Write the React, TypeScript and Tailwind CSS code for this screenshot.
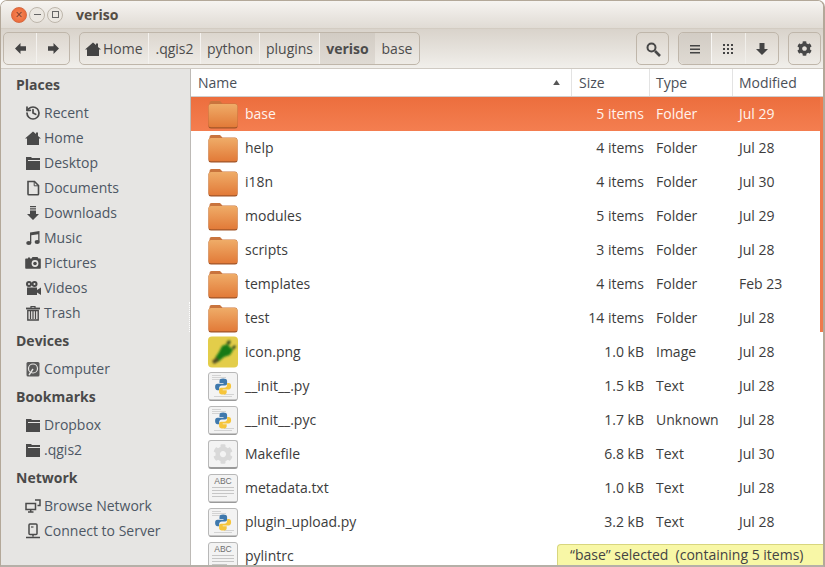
import { History } from 'lucide-react';
import { FaCog } from 'react-icons/fa';

const font = { fontFamily: '"Open Sans", "Noto Sans", sans-serif' };

const HomeIcon = ({ className = 'w-4 h-4' }: { className?: string }) => (
  <svg viewBox="0 0 16 16" className={className} fill="currentColor">
    <path d="M8 1.5 11 4V2.5h2v3.4L16 8.6h-2V15H2V8.6H0z" />
  </svg>
);

const FolderGlyph = () => (
  <svg viewBox="0 0 16 16" className="w-4 h-4" fill="currentColor">
    <path d="M1 2h5l1 1h8v12H1z" />
    <path d="M3 5h12v1H3z" fill="#e6e5e3" />
  </svg>
);

const DocIcon = () => (
  <svg viewBox="0 0 16 16" className="w-4 h-4" fill="none" stroke="currentColor" strokeWidth="1.6">
    <path d="M3 1.5h6.5L13.5 5.5V14a.8.8 0 0 1-.8.8H3.8A.8.8 0 0 1 3 14z" />
    <path d="M9.2 1.5v4.3h4.3" strokeWidth="1" />
  </svg>
);

const DownloadIcon = () => (
  <svg viewBox="0 0 16 16" className="w-4 h-4" fill="currentColor">
    <path d="M5 1h6v1.3H5zM5 3.3h6v1.3H5zM5 5.6h6V9h3l-6 6-6-6h3z" />
  </svg>
);

const MusicIcon = () => (
  <svg viewBox="0 0 16 16" className="w-4 h-4" fill="currentColor">
    <path d="M5 2.5 14.5 1v10.5h-1.3V4.2L6.3 5.3V13H5z" />
    <ellipse cx="3.8" cy="13" rx="2.6" ry="2" />
    <ellipse cx="12.2" cy="12" rx="2.6" ry="2" />
  </svg>
);

const CameraIcon = () => (
  <svg viewBox="0 0 16 16" className="w-4 h-4" fill="currentColor">
    <path d="M1 3.5h2V2.5h2v1h1.5L7.5 2h5l1 1.5H15a.8.8 0 0 1 .8.8V13a.8.8 0 0 1-.8.8H1a.8.8 0 0 1-.8-.8V4.300a.8.8 0 0 1 .8-.8z" />
    <circle cx="10" cy="8.500" r="3.400" fill="#e6e5e3" />
    <circle cx="10" cy="8.500" r="1.800" />
  </svg>
);

const VideoIcon = () => (
  <svg viewBox="0 0 16 16" className="w-4 h-4" fill="currentColor">
    <circle cx="4" cy="4" r="3" />
    <circle cx="9.500" cy="4" r="3" />
    <circle cx="4" cy="4" r="1" fill="#e6e5e3" />
    <circle cx="9.500" cy="4" r="1" fill="#e6e5e3" />
    <path d="M2 7.500h10V10l4-2.500V15l-4-2.500V15H2z" />
  </svg>
);

const TrashIcon = () => (
  <svg viewBox="0 0 16 16" className="w-4 h-4" fill="none" stroke="currentColor">
    <path d="M1 3.500h14" strokeWidth="1.800" />
    <path d="M6 3V1.500h4V3" strokeWidth="1.200" />
    <path d="M2.800 5.500h10.400V15H2.800z" strokeWidth="1.400" />
    <path d="M5.500 6v8M8 6v8M10.500 6v8" strokeWidth="1.200" />
  </svg>
);

const DriveIcon = () => (
  <svg viewBox="0 0 16 16" className="w-4 h-4">
    <rect x="1.500" y="1" width="13" height="14.500" rx="1.500" fill="#5a5a5a" />
    <circle cx="8" cy="7.500" r="4.500" fill="none" stroke="#e6e5e3" strokeWidth="1.200" />
    <path d="M8 8 4 14" stroke="#e6e5e3" strokeWidth="1.400" />
  </svg>
);

const NetworkIcon = () => (
  <svg viewBox="0 0 16 16" className="w-4 h-4" fill="none" stroke="currentColor" strokeWidth="1.500">
    <path d="M1 5.500h9.500v6H1z" />
    <path d="M3 14h5.500M5.700 11.500V14" />
    <path d="M10 2h5v5.500h-2.500" />
  </svg>
);

const ServerIcon = () => (
  <svg viewBox="0 0 16 16" className="w-4 h-4" fill="none" stroke="currentColor" strokeWidth="1.500">
    <rect x="4" y="1" width="8" height="10.500" rx="1" />
    <path d="M8 11.500v2M1 14.500h14" />
    <path d="M6 4h2.500" strokeWidth="1.200" />
  </svg>
);

const Folder = () => (
  <svg viewBox="0 0 30 30" className="w-[30px] h-[30px] shrink-0">
    <defs>
      <linearGradient id="fold" x1="0" y1="0" x2="0" y2="1">
        <stop offset="0" stopColor="#efac68" />
        <stop offset="1" stopColor="#e27a38" />
      </linearGradient>
    </defs>
    <path d="M1.500 4a2 2 0 0 1 2-2h8.500l2.500 2.500H27a2 2 0 0 1 2 2V10H1.500z" fill="#c9743d" />
    <rect x="0.500" y="5" width="29" height="24.500" rx="2.500" fill="#a05528" />
    <rect x="0.500" y="5" width="29" height="23.300" rx="2.500" fill="url(#fold)" />
  </svg>
);

const TextLines = () => (
  <g fill="#cbcbcb">
    <rect x="4" y="3" width="9" height=".8" />
    <rect x="4" y="5" width="14" height=".8" />
    <rect x="4" y="7" width="8" height=".8" />
    <rect x="16" y="22" width="10" height=".8" />
    <rect x="6" y="24" width="18" height=".8" />
  </g>
);

const PythonFile = () => (
  <svg viewBox="0 0 30 29" className="w-[30px] h-[29px] shrink-0">
    <rect x="0.500" y="0.500" width="29" height="28" rx="2.500" fill="#f3f3f3" stroke="#b8b8b8" />
    <path d="M1 27.500h28a2 2 0 0 1-2 1.500H3a2 2 0 0 1-2-1.500z" fill="#9a9a9a" />
    <TextLines />
    <g transform="translate(5.500 5) scale(.8)">
      <path d="M12 2C9 2 7.500 3 7.500 5v2.500h5v1H5C3 8.500 2 10 2 12.500s1 4 3 4h2V14c0-2 1.500-3.500 3.500-3.500h4c1.500 0 2.500-1 2.500-2.500V5c0-2-2-3-5-3z" fill="#3f79ad" />
      <path d="M12 2C9 2 7.500 3 7.500 5v2.500h5v1H5C3 8.500 2 10 2 12.500s1 4 3 4h2V14c0-2 1.500-3.500 3.500-3.500h4c1.500 0 2.500-1 2.500-2.500V5c0-2-2-3-5-3z" fill="#f6c53b" transform="rotate(180 12 12)" />
    </g>
  </svg>
);

const AbcFile = () => (
  <svg viewBox="0 0 30 29" className="w-[30px] h-[29px] shrink-0">
    <rect x="0.500" y="0.500" width="29" height="28" rx="2.500" fill="#f3f3f3" stroke="#b8b8b8" />
    <path d="M1 27.500h28a2 2 0 0 1-2 1.500H3a2 2 0 0 1-2-1.500z" fill="#9a9a9a" />
    <text x="15" y="10" textAnchor="middle" fontSize="8.500" fill="#707070" style={{ fontFamily: '"Liberation Sans", sans-serif' }}>ABC</text>
    <g fill="#c6c6c6">
      <rect x="4" y="13" width="22" height="1" />
      <rect x="4" y="16" width="22" height="1" />
      <rect x="4" y="19" width="22" height="1" />
      <rect x="4" y="22" width="15" height="1" />
    </g>
  </svg>
);

const GearFile = () => (
  <div className="w-[30px] h-[29px] shrink-0 rounded-[3px] border border-[#b8b8b8] border-b-2 border-b-[#9a9a9a] bg-[#f3f3f3] flex items-center justify-center">
    <FaCog className="w-[20px] h-[20px] text-[#d9d9d9]" />
  </div>
);

const ImageFile = () => (
  <svg viewBox="0 0 30 32" className="w-[30px] h-[32px] shrink-0">
    <defs>
      <filter id="soft"><feGaussianBlur stdDeviation="1.200" /></filter>
    </defs>
    <rect x="0" y="0.500" width="30" height="31" rx="4" fill="#e3cd4a" />
    <g filter="url(#soft)">
      <path d="M7 22 11 16 14 10 19 8 25 14 22 19 16 21 10 26z" fill="#157a18" />
      <path d="M4 25 9 21 11 25 6 28z" fill="#4e4c20" />
      <path d="M18 7l3-3 2 2-2 3zM24 11l3-2 1 2-3 3z" fill="#2d4a1b" />
    </g>
  </svg>
);

const places = [
  { label: 'Recent', icon: <History className="w-4 h-4" strokeWidth={2.6} /> },
  { label: 'Home', icon: <HomeIcon /> },
  { label: 'Desktop', icon: <FolderGlyph /> },
  { label: 'Documents', icon: <DocIcon /> },
  { label: 'Downloads', icon: <DownloadIcon /> },
  { label: 'Music', icon: <MusicIcon /> },
  { label: 'Pictures', icon: <CameraIcon /> },
  { label: 'Videos', icon: <VideoIcon /> },
  { label: 'Trash', icon: <TrashIcon /> },
];

const files = [
  { name: 'base', size: '5 items', type: 'Folder', date: 'Jul 29', icon: <Folder /> },
  { name: 'help', size: '4 items', type: 'Folder', date: 'Jul 28', icon: <Folder /> },
  { name: 'i18n', size: '4 items', type: 'Folder', date: 'Jul 30', icon: <Folder /> },
  { name: 'modules', size: '5 items', type: 'Folder', date: 'Jul 29', icon: <Folder /> },
  { name: 'scripts', size: '3 items', type: 'Folder', date: 'Jul 28', icon: <Folder /> },
  { name: 'templates', size: '4 items', type: 'Folder', date: 'Feb 23', icon: <Folder /> },
  { name: 'test', size: '14 items', type: 'Folder', date: 'Jul 28', icon: <Folder /> },
  { name: 'icon.png', size: '1.0 kB', type: 'Image', date: 'Jul 28', icon: <ImageFile /> },
  { name: '__init__.py', size: '1.5 kB', type: 'Text', date: 'Jul 28', icon: <PythonFile /> },
  { name: '__init__.pyc', size: '1.7 kB', type: 'Unknown', date: 'Jul 28', icon: <PythonFile /> },
  { name: 'Makefile', size: '6.8 kB', type: 'Text', date: 'Jul 30', icon: <GearFile /> },
  { name: 'metadata.txt', size: '1.0 kB', type: 'Text', date: 'Jul 28', icon: <AbcFile /> },
  { name: 'plugin_upload.py', size: '3.2 kB', type: 'Text', date: 'Jul 28', icon: <PythonFile /> },
  { name: 'pylintrc', size: '', type: '', date: '', icon: <AbcFile /> },
];

const SideHeading = ({ children }: { children: string }) => (
  <div className="h-[29px] pb-[1px] flex items-center pl-[15px] font-bold text-[#4a4a4a]">{children}</div>
);

const SideItem = ({ label, icon }: { label: string; icon: React.ReactNode }) => (
  <div className="h-[25px] flex items-center pl-[24px] gap-[3px] text-[#4d5764]">
    <span className="text-[#4a4a4a] w-4 h-4 flex">{icon}</span>
    <span>{label}</span>
  </div>
);

const crumbs = [
  { label: '.qgis2', width: 'w-[52px]' },
  { label: 'python', width: 'w-[59px]' },
  { label: 'plugins', width: 'w-[60px]' },
];

export default function App() {
  return (
    <div style={font} className="w-[825px] h-[567px] overflow-hidden bg-white text-[14px] leading-none">
      <div className="w-full h-[567px] flex flex-col rounded-t-[7px] border border-[#b3a899] border-b-2 border-b-[#b5b0a8] border-r-2 overflow-hidden">
        {/* title bar */}
        <div className="h-[28px] shrink-0 flex items-center pl-[10px] bg-gradient-to-b from-[#f6f4f1] to-[#e0dbd4] border-b border-[#d3ccc2]">
          <div className="w-[16px] h-[16px] rounded-full bg-[radial-gradient(circle,#f58a5e,#e9602c)] border border-[#d56a42] text-[#6e3320] flex items-center justify-center text-[12px]">×</div>
          <div className="ml-[2px] w-[16px] h-[16px] rounded-full bg-[#ebe7e1] border border-[#bdb6ab] flex items-center justify-center">
            <div className="w-[7px] h-px bg-[#666]" />
          </div>
          <div className="ml-[2px] w-[16px] h-[16px] rounded-full bg-[#ebe7e1] border border-[#bdb6ab] flex items-center justify-center">
            <div className="w-[7px] h-[7px] border border-[#666]" />
          </div>
          <span className="ml-[13px] font-bold text-[#544d44]">veriso</span>
        </div>

        {/* toolbar */}
        <div className="h-[40px] shrink-0 flex items-center pl-[2px] pr-[2px] bg-gradient-to-b from-[#d9d3cb] to-[#f1efeb] border-b border-[#cfcac3] text-[#4c4c4c]">
          <div className="h-[33px] w-[67px] flex rounded-[5px] border border-[#bfb6aa] bg-gradient-to-b from-[#dcd6ce] to-[#eeebe6]">
            <div className="flex-1 flex items-center justify-center border-r border-[#f4f2ef]">
              <svg viewBox="0 0 12 12" className="w-[11px] h-[11px]" fill="#444"><path d="M0 6 6 0v3.500h6v5H6V12z" /></svg>
            </div>
            <div className="flex-1 flex items-center justify-center">
              <svg viewBox="0 0 12 12" className="w-[11px] h-[11px]" fill="#444"><path d="M12 6 6 0v3.500H0v5h6V12z" /></svg>
            </div>
          </div>

          <div className="ml-[9px] h-[33px] flex rounded-[5px] border border-[#bfb6aa] bg-gradient-to-b from-[#dcd6ce] to-[#eeebe6]">
            <div className="w-[69px] flex items-center pl-[5px] gap-[2px] border-r border-[#f4f2ef]">
              <HomeIcon className="w-[16px] h-[16px] text-[#444]" />
              <span>Home</span>
            </div>
            {crumbs.map(c => (
              <div key={c.label} className={`${c.width} flex items-center justify-center border-r border-[#f4f2ef]`}>{c.label}</div>
            ))}
            <div className="w-[55px] flex items-center justify-center font-bold bg-gradient-to-b from-[#d2ccc4] to-[#dfdad3]">veriso</div>
            <div className="w-[44px] flex items-center justify-center">base</div>
          </div>

          <div className="ml-auto w-[33px] h-[33px] rounded-[5px] border border-[#bfb6aa] bg-gradient-to-b from-[#dcd6ce] to-[#eeebe6] flex items-center justify-center">
            <svg viewBox="0 0 16 16" className="w-[16px] h-[16px]" fill="none" stroke="#484848"><circle cx="6.500" cy="6.500" r="4" strokeWidth="2" /><path d="m10 10 5 5" strokeWidth="2.600" /></svg>
          </div>

          <div className="ml-[9px] h-[33px] w-[101px] flex rounded-[5px] border border-[#bfb6aa] bg-gradient-to-b from-[#dcd6ce] to-[#eeebe6]">
            <div className="flex-1 flex items-center justify-center border-r border-[#f7f6f4] bg-gradient-to-b from-[#d2ccc4] to-[#dfdad3] rounded-l-[5px]">
              <svg viewBox="0 0 12 12" className="w-[12px] h-[12px]" fill="#444"><path d="M1 2h10v1.500H1zM1 5.500h10V7H1zM1 9h10v1.500H1z" /></svg>
            </div>
            <div className="flex-1 flex items-center justify-center border-r border-[#f1efeb]">
              <svg viewBox="0 0 12 12" className="w-[12px] h-[12px]" fill="#444"><path d="M1 1h2v2H1zM5 1h2v2H5zM9 1h2v2H9zM1 5h2v2H1zM5 5h2v2H5zM9 5h2v2H9zM1 9h2v2H1zM5 9h2v2H5zM9 9h2v2H9z" /></svg>
            </div>
            <div className="flex-1 flex items-center justify-center">
              <svg viewBox="0 0 12 12" className="w-[12px] h-[12px]" fill="#444"><path d="M3.500 0h5v6H12l-6 6-6-6h3.500z" /></svg>
            </div>
          </div>

          <div className="ml-[9px] w-[33px] h-[33px] rounded-[5px] border border-[#bfb6aa] bg-gradient-to-b from-[#dcd6ce] to-[#eeebe6] flex items-center justify-center">
            <FaCog className="w-[15px] h-[15px] text-[#484848]" />
          </div>
        </div>

        {/* body */}
        <div className="flex-1 min-h-0 flex">
          <aside className="relative w-[190px] shrink-0 bg-[#e6e5e3] border-r border-[#bdbab6] pt-[2px]">
            <SideHeading>Places</SideHeading>
            {places.map(p => <SideItem key={p.label} {...p} />)}
            <div className="mt-[2px]"><SideHeading>Devices</SideHeading></div>
            <SideItem label="Computer" icon={<DriveIcon />} />
            <div className="mt-[2px]"><SideHeading>Bookmarks</SideHeading></div>
            <SideItem label="Dropbox" icon={<FolderGlyph />} />
            <SideItem label=".qgis2" icon={<FolderGlyph />} />
            <div className="mt-[2px]"><SideHeading>Network</SideHeading></div>
            <SideItem label="Browse Network" icon={<NetworkIcon />} />
            <SideItem label="Connect to Server" icon={<ServerIcon />} />
            <div className="absolute right-0 top-[233px] h-[30px] border-r border-dotted border-[#ffffff]" />
          </aside>

          <main className="relative flex-1 min-w-0 overflow-hidden bg-white text-[#3c3c3c]">
            <div className="h-[28px] grid grid-cols-[381px_78px_83px_1fr] border-b border-[#cfcfcf] text-[#4a4f57]">
              <div className="relative flex items-center pl-[7px] border-r border-[#e3e3e3]">
                Name
                <svg viewBox="0 0 8 6" className="absolute right-[11px] top-[11px] w-[7px] h-[5px]" fill="#555"><path d="M4 0 8 6H0z" /></svg>
              </div>
              <div className="flex items-center pl-[7px] border-r border-[#e3e3e3]">Size</div>
              <div className="flex items-center pl-[6px] border-r border-[#e3e3e3]">Type</div>
              <div className="flex items-center pl-[6px]">Modified</div>
            </div>

            {files.map((f, i) => (
              <div key={f.name} className={`h-[34px] grid grid-cols-[381px_78px_83px_1fr] items-center ${i === 0 ? 'bg-gradient-to-b from-[#ec6e3d] to-[#f47e50] text-[#fff3ec]' : ''}`}>
                <div className="flex items-center pl-[17px] gap-[7px]">
                  {f.icon}
                  <span>{f.name}</span>
                </div>
                <div className="text-right pr-[6px]">{f.size}</div>
                <div className="pl-[6px]">{f.type}</div>
                <div className="pl-[6px]">{f.date}</div>
              </div>
            ))}

            {/* overlay scrollbar thumb and status */}
            <div className="absolute right-0 top-[28px] w-[3px] h-[235px] bg-[#ef7a4d]" />
            <div className="absolute right-0 bottom-0 w-[266px] h-[21px] flex items-center pl-[12px] bg-[#f8f7a6] border-t border-l border-[#d8d67e] rounded-tl-[4px] text-[#444]">
              “base” selected&nbsp; (containing 5 items)
            </div>
          </main>
        </div>
      </div>
    </div>
  );
}
